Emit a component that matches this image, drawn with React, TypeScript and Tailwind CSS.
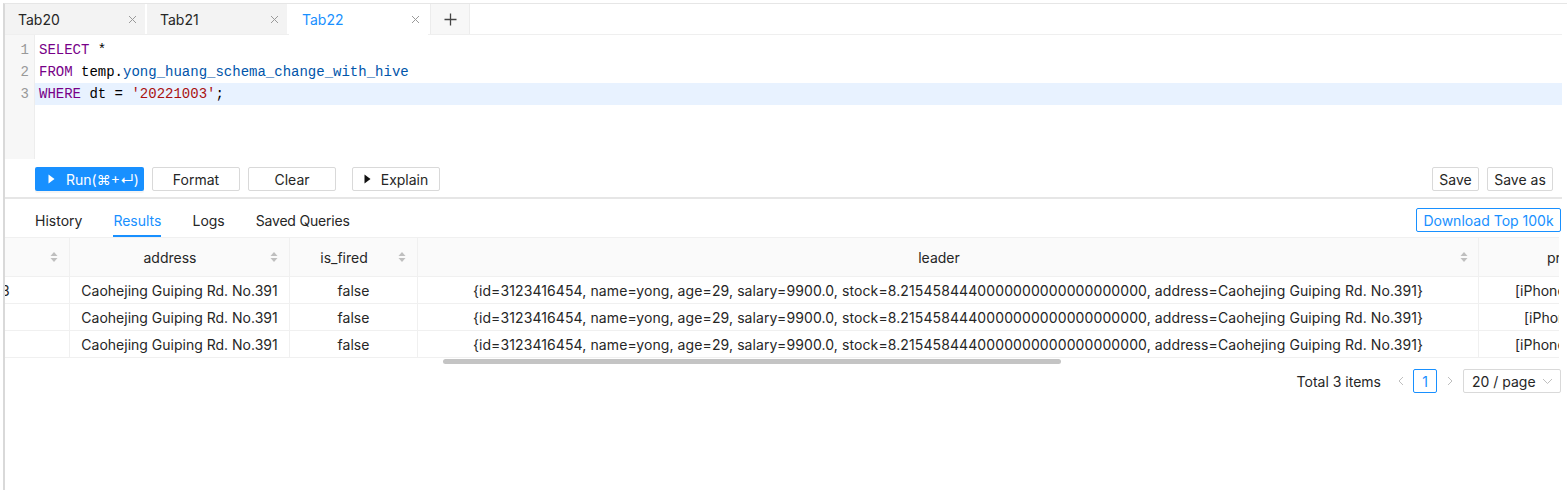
import React from "react";

const Sorter = () => (
  <svg width="8" height="12" viewBox="0 0 8 12" className="shrink-0">
    <path d="M4 1 L7.5 5 L0.5 5 Z" fill="#bfbfbf" />
    <path d="M4 11 L7.5 7 L0.5 7 Z" fill="#bfbfbf" />
  </svg>
);

const Play = ({ color }: { color: string }) => (
  <svg width="7" height="10" viewBox="0 0 7 10">
    <path d="M0.5 0.5 L6.5 5 L0.5 9.5 Z" fill={color} />
  </svg>
);

const Close = () => (
  <svg width="9" height="9" viewBox="0 0 9 9">
    <path d="M1 1 L8 8 M8 1 L1 8" stroke="#9a9a9a" strokeWidth="1" />
  </svg>
);

const leader =
  "{id=3123416454, name=yong, age=29, salary=9900.0, stock=8.2154584440000000000000000000, address=Caohejing Guiping Rd. No.391}";

export default function App() {
  const rows = [
    { first: "3", pr: "[iPhone X, MacBook]", prPad: "pl-[36px]" },
    { first: "", pr: "[iPhone 12, iPad]", prPad: "pl-[45px]" },
    { first: "", pr: "[iPhone X, MacBook]", prPad: "pl-[36px]" },
  ];
  return (
    <div className="w-[1567px] h-[490px] bg-white pt-[3px] font-['Inter','Liberation_Sans',sans-serif] text-[14px] text-[#262626] overflow-hidden">
      <div className="h-[487px] ml-[3px] border-l-2 border-l-[#d9d9d9] border-t border-t-[#e6e6e6] flex flex-col">
        <div className="w-[1557px] flex flex-col">
          {/* Tab bar */}
          <div className="h-[31px] flex gap-[2px] border-b border-[#efefef]">
            <div className="w-[140px] bg-[#f3f3f3] flex items-center justify-between pl-[13px] pr-[8px]">
              <span>Tab20</span>
              <Close />
            </div>
            <div className="w-[140px] bg-[#f3f3f3] flex items-center justify-between pl-[13px] pr-[8px]">
              <span>Tab21</span>
              <Close />
            </div>
            <div className="w-[139px] bg-white flex items-center justify-between pl-[13px] pr-[8px] -mb-px">
              <span className="text-[#1890ff]">Tab22</span>
              <Close />
            </div>
            <div className="w-[40px] bg-[#f7f7f7] border-x border-[#ececec] flex items-center justify-center">
              <svg width="13" height="13" viewBox="0 0 13 13">
                <path d="M6.5 0.5 V12.5 M0.5 6.5 H12.5" stroke="#444" strokeWidth="1.3" />
              </svg>
            </div>
          </div>

          {/* Editor */}
          <div className="h-[124px] flex font-['Liberation_Mono',monospace] text-[14px] leading-[22px]">
            <div className="w-[30px] bg-[#f7f7f7] border-r border-[#ededed] pt-[4px] text-right pr-[5px] text-[#999]">
              <div>1</div>
              <div>2</div>
              <div>3</div>
            </div>
            <div className="flex-1 pt-[4px] text-black">
              <div className="pl-[4px]">
                <span className="text-[#708]">SELECT</span> *
              </div>
              <div className="pl-[4px]">
                <span className="text-[#708]">FROM</span> temp.
                <span className="text-[#05a]">yong_huang_schema_change_with_hive</span>
              </div>
              <div className="pl-[4px] bg-[#e8f2ff]">
                <span className="text-[#708]">WHERE</span> dt = <span className="text-[#a11]">'20221003'</span>;
              </div>
            </div>
          </div>

          {/* Buttons */}
          <div className="mt-[8px] h-[24px] flex items-center pl-[30px] pr-[9px]">
            <button className="h-[24px] w-[109px] bg-[#1890ff] text-white rounded-[2px] flex items-center gap-[11px] pl-[13px] shadow-[0_2px_0_rgba(0,0,0,0.04)]">
              <Play color="#fff" />
              <span>Run(⌘+↵)</span>
            </button>
            <button className="ml-[8px] h-[24px] w-[88px] border border-[#d9d9d9] rounded-[2px]">Format</button>
            <button className="ml-[8px] h-[24px] w-[88px] border border-[#d9d9d9] rounded-[2px]">Clear</button>
            <button className="ml-[16px] h-[24px] w-[88px] border border-[#d9d9d9] rounded-[2px] flex items-center justify-center gap-[10px]">
              <Play color="#111" />
              <span>Explain</span>
            </button>
            <div className="flex-1" />
            <button className="h-[24px] w-[47px] border border-[#d9d9d9] rounded-[2px]">Save</button>
            <button className="ml-[8px] h-[24px] w-[66px] border border-[#d9d9d9] rounded-[2px]">Save as</button>
          </div>

          <div className="mt-[6px] h-[2px] bg-[#e6e6e6]" />

          {/* Result tabs */}
          <div className="h-[38px] flex items-end pl-[30px] pr-[1px]">
            <div className="flex gap-[31px] h-full">
              <div className="flex items-center pt-[4px]">History</div>
              <div className="flex items-center pt-[4px] text-[#1890ff] relative">
                Results
                <div className="absolute left-0 right-0 bottom-0 h-[2px] bg-[#1890ff]" />
              </div>
              <div className="flex items-center pt-[4px]">Logs</div>
              <div className="flex items-center pt-[4px] tracking-[-0.2px]">Saved Queries</div>
            </div>
            <div className="flex-1" />
            <button className="self-start mt-[9px] h-[24px] w-[145px] border border-[#1890ff] text-[#1890ff] rounded-[2px]">
              Download Top 100k
            </button>
          </div>

          {/* Table */}
          <div className="w-[1554px] overflow-hidden">
            <div className="flex h-[40px] bg-[#fafafa] border-y border-[#f0f0f0] w-max">
              <div className="w-[65px] flex items-center justify-end pr-[11px] border-r border-[#f0f0f0]">
                <Sorter />
              </div>
              <div className="w-[220px] flex items-center pr-[11px] border-r border-[#f0f0f0]">
                <span className="flex-1 text-center">address</span>
                <Sorter />
              </div>
              <div className="w-[128px] flex items-center pr-[11px] border-r border-[#f0f0f0]">
                <span className="flex-1 text-center">is_fired</span>
                <Sorter />
              </div>
              <div className="w-[1061px] flex items-center pr-[10px] border-r border-[#f0f0f0]">
                <span className="flex-1 text-center">leader</span>
                <Sorter />
              </div>
              <div className="w-[200px] flex items-center pl-[68px]">product</div>
            </div>
            {rows.map((r, i) => (
              <div key={i} className="flex h-[27px] border-b border-[#f0f0f0] w-max">
                <div className="w-[65px] flex items-center border-r border-[#f0f0f0] overflow-hidden">
                  <span className="-ml-[4px]">{r.first}</span>
                </div>
                <div className="w-[220px] flex items-center justify-center border-r border-[#f0f0f0]">
                  Caohejing Guiping Rd. No.391
                </div>
                <div className="w-[128px] flex items-center justify-center border-r border-[#f0f0f0]">false</div>
                <div className="w-[1061px] flex items-center justify-center border-r border-[#f0f0f0] whitespace-nowrap tracking-[0.1px]">
                  {leader}
                </div>
                <div className={`w-[200px] flex items-center whitespace-nowrap ${r.prPad}`}>{r.pr}</div>
              </div>
            ))}
          </div>

          {/* Scrollbar */}
          <div className="h-[7px] relative">
            <div className="absolute left-[438px] w-[618px] top-[1px] h-[5px] rounded-full bg-[#c4c4c4]" />
          </div>

          {/* Pagination */}
          <div className="mt-[4px] flex items-center justify-end pr-[1px] gap-0 h-[24px]">
            <span className="mr-[16px]">Total 3 items</span>
            <svg width="8" height="10" viewBox="0 0 8 10" className="mr-[8px]">
              <path d="M6 1 L2 5 L6 9" stroke="#bfbfbf" strokeWidth="1" fill="none" />
            </svg>
            <div className="w-[24px] h-[24px] border border-[#1890ff] rounded-[2px] text-[#1890ff] flex items-center justify-center">1</div>
            <svg width="8" height="10" viewBox="0 0 8 10" className="ml-[9px] mr-[9px]">
              <path d="M2 1 L6 5 L2 9" stroke="#bfbfbf" strokeWidth="1" fill="none" />
            </svg>
            <div className="w-[98px] h-[24px] border border-[#d9d9d9] rounded-[2px] flex items-center justify-between pl-[8px] pr-[7px]">
              <span>20 / page</span>
              <svg width="11" height="7" viewBox="0 0 11 7">
                <path d="M1 1 L5.5 5.5 L10 1" stroke="#bfbfbf" strokeWidth="1" fill="none" />
              </svg>
            </div>
          </div>
        </div>
      </div>
    </div>
  );
}
